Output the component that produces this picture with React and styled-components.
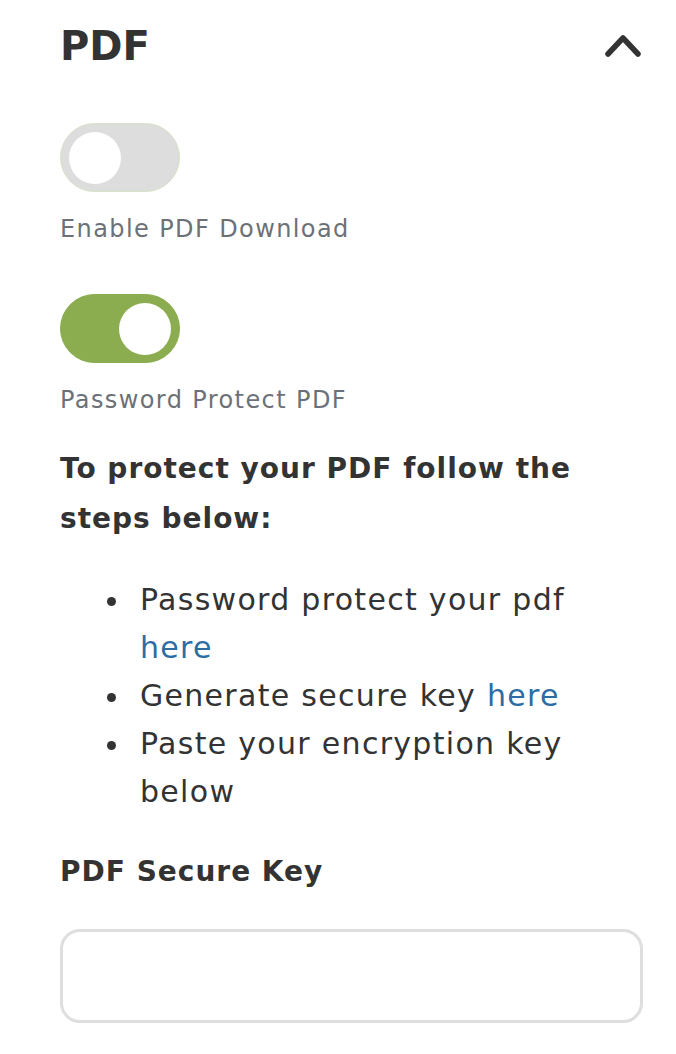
import React, { useState } from "react";
import styled, { createGlobalStyle } from "styled-components";

const GlobalStyle = createGlobalStyle`
  body {
    margin: 0;
    background: #fff;
    font-family: "DejaVu Sans", "Noto Sans", sans-serif;
    color: #333;
  }
`;

const Panel = styled.section`
  width: 676px;
  box-sizing: border-box;
  padding: 20px 33px 0 60px;
`;

const Header = styled.div`
  display: flex;
  align-items: center;
  justify-content: space-between;
  height: 52px;
`;

const Title = styled.h2`
  margin: 0;
  font-size: 40px;
  font-weight: 700;
  line-height: 52px;
  color: #333;
`;

const Collapse = styled.button`
  border: 0;
  background: none;
  padding: 0 1px 0 0;
  display: flex;
  cursor: pointer;
`;

const Field = styled.div`
  margin-top: ${(p) => p.$top || 0}px;
`;

const Switch = styled.button`
  display: flex;
  align-items: center;
  width: 120px;
  height: 69px;
  padding: 0 8px;
  box-sizing: border-box;
  border-radius: 35px;
  border: 1px solid ${(p) => (p.$on ? "#8bad4f" : "#d6e2c6")};
  background: ${(p) => (p.$on ? "#8bad4f" : "#dddddd")};
  justify-content: ${(p) => (p.$on ? "flex-end" : "flex-start")};
  cursor: pointer;
`;

const Knob = styled.span`
  width: 52px;
  height: 52px;
  border-radius: 50%;
  background: #fff;
`;

const Label = styled.div`
  margin-top: 20px;
  font-size: 24px;
  letter-spacing: 1.4px;
  line-height: 34px;
  color: #6c7178;
`;

const Steps = styled.h3`
  margin: 27px 0 0;
  font-size: 28px;
  letter-spacing: 1px;
  font-weight: 700;
  line-height: 50px;
  color: #333;
`;

const List = styled.ul`
  margin: 32px 0 0;
  padding-left: 72px;
  font-size: 30px;
  letter-spacing: 1.3px;
  line-height: 48px;
  color: #333;
`;

const Step = styled.li`
  padding-left: 8px;
`;

const Link = styled.a`
  color: #2e6da4;
  text-decoration: none;
`;

const KeyLabel = styled.h3`
  margin: 32px 0 0;
  font-size: 28px;
  letter-spacing: 1px;
  font-weight: 700;
  line-height: 48px;
`;

const KeyInput = styled.input`
  display: block;
  margin-top: 33px;
  width: 100%;
  height: 94px;
  box-sizing: border-box;
  border: 3px solid #dedede;
  border-radius: 20px;
  padding: 0 20px;
  font-size: 24px;
  outline: none;
`;

export default function App() {
  const [download, setDownload] = useState(false);
  const [protect, setProtect] = useState(true);

  return (
    <>
      <GlobalStyle />
      <Panel>
        <Header>
          <Title>PDF</Title>
          <Collapse aria-label="Collapse">
            <svg width="38" height="24" viewBox="0 0 38 24">
              <path
                d="M4 20 L19 4 L34 20"
                fill="none"
                stroke="#333"
                strokeWidth="5.5"
                strokeLinecap="round"
                strokeLinejoin="round"
              />
            </svg>
          </Collapse>
        </Header>

        <Field $top={51}>
          <Switch $on={download} onClick={() => setDownload(!download)}>
            <Knob />
          </Switch>
          <Label>Enable PDF Download</Label>
        </Field>

        <Field $top={48}>
          <Switch $on={protect} onClick={() => setProtect(!protect)}>
            <Knob />
          </Switch>
          <Label>Password Protect PDF</Label>
        </Field>

        <Steps>To protect your PDF follow the steps below:</Steps>
        <List>
          <Step>
            Password protect your pdf <Link href="#">here</Link>
          </Step>
          <Step>
            Generate secure key <Link href="#">here</Link>
          </Step>
          <Step>Paste your encryption key below</Step>
        </List>

        <KeyLabel>PDF Secure Key</KeyLabel>
        <KeyInput type="text" />
      </Panel>
    </>
  );
}
